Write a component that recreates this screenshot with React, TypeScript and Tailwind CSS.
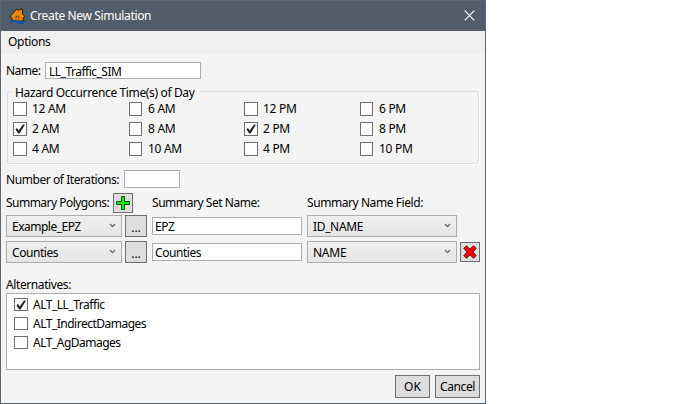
import React from "react";

function Check({ on, size = "w-3.5 h-3.5" }: { on?: boolean; size?: string }) {
  return (
    <span className={`${size} flex shrink-0 items-center justify-center border border-[#707070] bg-white`}>
      {on && (
        <svg width="12" height="12" viewBox="0 0 12 12" className="shrink-0">
          <path d="M1.4 6.2 L3 5 L4.7 7.4 L9 1.4 L10.9 1.7 L5.5 10.6 L4.2 10.6 Z" fill="#212121" />
        </svg>
      )}
    </span>
  );
}

function Combo({ text, width, track }: { text: string; width: string; track: string }) {
  return (
    <div className={`${width} flex h-[22px] shrink-0 items-center justify-between border border-[#acacac] bg-gradient-to-b from-[#f0f0f0] to-[#e5e5e5] pr-[5px] pl-[5px]`}>
      <span className={`${track} pt-0.5`}>{text}</span>
      <svg width="7" height="5" viewBox="0 0 7 5" className="-mt-0.5">
        <path d="M1 1 L3.5 3.6 L6 1" fill="none" stroke="#606060" strokeWidth="1.2" />
      </svg>
    </div>
  );
}

function Field({ text, size, track = "" }: { text?: string; size: string; track?: string }) {
  return (
    <div className={`${size} flex shrink-0 items-center border border-[#abadb3] bg-white`}>
      <span className={`${track} pt-0.5`}>{text}</span>
    </div>
  );
}

const button = "flex shrink-0 items-center justify-center border border-[#707070] bg-[#dddddd]";

const columns = [
  { x: "w-[116px]", box: "w-3.5 h-3.5", gap: "gap-[5px]", items: [["12 AM", false], ["2 AM", true], ["4 AM", false]] },
  { x: "w-[115px]", box: "w-[13px] h-3.5", gap: "gap-1.5", items: [["6 AM", false], ["8 AM", false], ["10 AM", false]] },
  { x: "w-[116px]", box: "w-3.5 h-3.5", gap: "gap-[5px]", items: [["12 PM", false], ["2 PM", true], ["4 PM", false]] },
  { x: "w-[100px]", box: "w-[13px] h-3.5", gap: "gap-1.5", items: [["6 PM", false], ["8 PM", false], ["10 PM", false]] },
] as const;

export default function App() {
  return (
    <div className="h-[404px] w-[692px] overflow-hidden bg-white font-['Noto_Sans',sans-serif] text-[12px] leading-4 whitespace-nowrap text-black">
      <div className="flex h-[404px] w-[486px] flex-col border border-t-0 border-[#5a6672] bg-[#f4f4f4]">
        <header className="flex h-[31px] shrink-0 items-center border-t border-[#5a6672] bg-[#525d6b] pr-2.5 pl-2 text-white">
          <svg width="17" height="17" viewBox="0 0 17 17" className="mr-1">
            <path d="M0.8 8.8 L7.7 1 L9.6 2.8 L11 1.2 H13.4 V5.6 L16 8.8 L14.2 9.6 V13 H2.8 V9.5 Z" fill="#ee8a0c" stroke="#241c14" strokeWidth="1" />
            <path d="M7 11.5 V8.2 H9.8 V11.5" fill="#ee8a0c" stroke="#5e3306" strokeWidth="0.8" />
            <path d="M0.6 12.4 Q4 10.6 7.5 12.3 T16.2 12.3 L15 15.6 Q11 17 8 15 T1 15.2 L2.5 13.8 Z" fill="#1252a8" />
          </svg>
          <span className="grow tracking-[-0.35px]">Create New Simulation</span>
          <svg width="11" height="11" viewBox="0 0 11 11" className="-mt-0.5">
            <path d="M0.7 0.7 L10.3 10.3 M10.3 0.7 L0.7 10.3" stroke="#fff" strokeWidth="1.15" />
          </svg>
        </header>
        <nav className="h-[23px] shrink-0 bg-[#efefef] pt-[3px] pl-[7px]">
          <span className="tracking-[-0.3px]">Options</span>
        </nav>

        <main className="flex grow flex-col pt-2 pr-[5px] pl-[5px]">
          <div className="flex h-[17px] items-center">
            <span className="w-[39px] pt-px tracking-[-0.5px]">Name:</span>
            <Field text="LL_Traffic_SIM" size="w-[156px] h-[17px] pl-[3px]" track="tracking-[-0.5px]" />
          </div>

          <fieldset className="mt-1.5 ml-px h-[79px] w-[472px] rounded-[3px] border border-[#d5dfe5] pl-[5px] shadow-[1px_1px_0_#fff]">
            <legend className="h-[13px] pr-[5px] pl-[2px] leading-[15px] tracking-[-0.36px]">Hazard Occurrence Time(s) of Day</legend>
            <div className="flex pt-1">
              {columns.map((c) => (
                <div key={c.items[0][0]} className={`${c.x} flex flex-col gap-1.5`}>
                  {c.items.map(([label, on]) => (
                    <label key={label} className={`flex h-3.5 items-center ${c.gap}`}>
                      <Check on={on} size={c.box} />
                      <span className="tracking-[-0.3px]">{label}</span>
                    </label>
                  ))}
                </div>
              ))}
            </div>
          </fieldset>

          <div className="mt-1.5 flex h-[18px] items-center">
            <span className="w-[118px] pt-0.5 tracking-[-0.43px]">Number of Iterations:</span>
            <Field size="w-14 h-[18px]" />
          </div>

          <div className="mt-[5px] flex h-5 items-center">
            <span className="w-[107px] tracking-[-0.52px]">Summary Polygons:</span>
            <div className={`${button} h-5 w-5`}>
              <svg width="16" height="16" viewBox="0 0 16 16">
                <path d="M6.5 1.5 H9.5 V6.5 H14.5 V9.5 H9.5 V14.5 H6.5 V9.5 H1.5 V6.5 H6.5 Z" fill="#0cf00c" stroke="#105010" />
              </svg>
            </div>
            <span className="ml-[19px] w-[155px] tracking-[-0.45px]">Summary Set Name:</span>
            <span className="tracking-[-0.43px]">Summary Name Field:</span>
          </div>

          <div className="mt-0.5 flex h-[22px] items-center">
            <Combo text="Example_EPZ" width="w-[116px]" track="tracking-[-0.5px]" />
            <div className={`${button} ml-[3px] h-[22px] w-[22px] pt-1`}>...</div>
            <div className="ml-[5px] flex">
              <Field text="EPZ" size="w-[150px] h-[18px] pl-0.5" track="tracking-[-0.4px]" />
            </div>
            <div className="ml-[5px]">
              <Combo text="ID_NAME" width="w-[150px]" track="tracking-[-0.35px]" />
            </div>
          </div>
          <div className="mt-1 flex h-[22px] items-center">
            <Combo text="Counties" width="w-[116px]" track="tracking-[-0.45px]" />
            <div className={`${button} ml-[3px] h-[22px] w-[22px] pt-1`}>...</div>
            <div className="ml-[5px] flex">
              <Field text="Counties" size="w-[150px] h-[18px] pl-0.5" track="tracking-[-0.45px]" />
            </div>
            <div className="ml-[5px]">
              <Combo text="NAME" width="w-[150px]" track="tracking-[-0.25px]" />
            </div>
            <div className={`${button} ml-[3px] h-5 w-5`}>
              <svg width="16" height="16" viewBox="0 0 16 16">
                <path d="M4.4 1.8 L8 5.1 L11.6 1.8 L14.2 4.4 L10.9 8 L14.2 11.6 L11.6 14.2 L8 10.9 L4.4 14.2 L1.8 11.6 L5.1 8 L1.8 4.4 Z" fill="#ee0808" stroke="#6a1010" />
              </svg>
            </div>
          </div>

          <div className="mt-[13px] h-[17px] pt-px">
            <span className="tracking-[-0.4px]">Alternatives:</span>
          </div>
          <div className="flex h-[77px] w-[474px] flex-col gap-1.5 border border-[#abadb3] bg-white pt-1 pl-[7px]">
            {([["ALT_LL_Traffic", true, "tracking-[-0.48px]"], ["ALT_IndirectDamages", false, "tracking-[-0.5px]"], ["ALT_AgDamages", false, "tracking-[-0.5px]"]] as [string, boolean, string][]).map(([label, on, track]) => (
              <label key={label} className="flex h-[13px] items-center gap-[5px]">
                <Check on={on} size="w-3.5 h-[13px]" />
                <span className={track}>{label}</span>
              </label>
            ))}
          </div>

          <div className="mt-[5px] flex justify-end gap-[5px]">
            <div className={`${button} h-[23px] w-[35px]`}>OK</div>
            <div className={`${button} h-[23px] w-[45px] tracking-[-0.4px]`}>Cancel</div>
          </div>
        </main>
      </div>
    </div>
  );
}
